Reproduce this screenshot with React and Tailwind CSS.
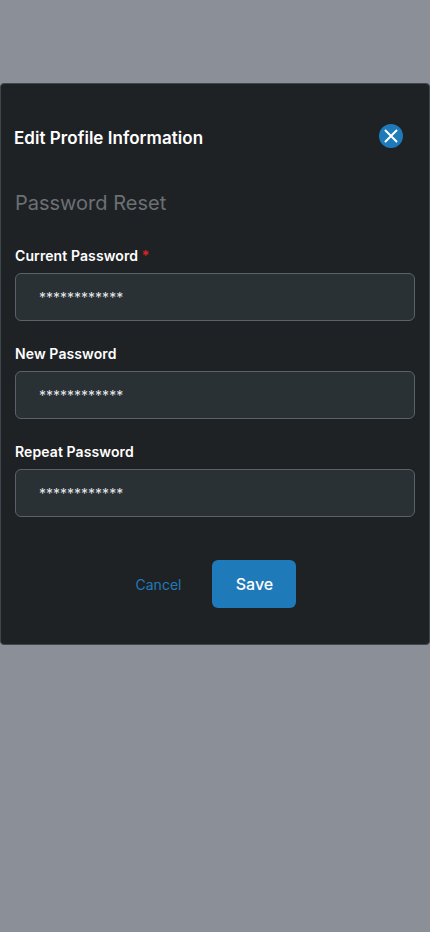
const fields = [
  { label: "Current Password", required: true },
  { label: "New Password" },
  { label: "Repeat Password" },
];

function PasswordField({ label, required }) {
  return (
    <div className="flex flex-col">
      <label className="h-[20px] text-[14px] leading-[20px] font-semibold tracking-[0.1px] text-white">
        {label}
        {required && <span className="text-[#e02424]"> *</span>}
      </label>
      <div className="mt-[7px] h-[48px] flex items-center rounded-[6px] border border-[#5a6169] bg-[#2a3135] pl-[23px] text-[14px] text-[#e5e7eb]">
        ************
      </div>
    </div>
  );
}

export default function App() {
  return (
    <div className="min-h-[932px] bg-[#8b8f97] pt-[83px] font-['Inter',sans-serif]">
      <div className="h-[562px] w-full rounded-[4px] border border-[#3f464c] bg-[#1f2225] px-[14px]">
        <div className="mt-[40px] flex h-[28px] items-center justify-between pr-[12px]">
          <h2 className="text-[17px] leading-[28px] font-semibold tracking-[0.04px] text-white -ml-px">
            Edit Profile Information
          </h2>
          <button className="-mt-[5px] flex h-[24px] w-[24px] items-center justify-center rounded-full bg-[#1f7ab9]">
            <svg width="24" height="24" viewBox="0 0 24 24" fill="none" stroke="white" strokeWidth="2" strokeLinecap="round">
              <path d="M6.5 6.5 L17.5 17.5 M17.5 6.5 L6.5 17.5" />
            </svg>
          </button>
        </div>
        <h3 className="mt-[37px] text-[20px] leading-[28px] text-[#6b7075]">
          Password Reset
        </h3>
        <div className="mt-[29px] flex flex-col gap-[23px]">
          {fields.map((field) => (
            <PasswordField key={field.label} {...field} />
          ))}
        </div>
        <div className="mt-[43px] flex items-center justify-center gap-[31px] pl-[2px]">
          <button className="text-[14px] text-[#1f7ab9]">Cancel</button>
          <button className="h-[48px] w-[84px] rounded-[6px] bg-[#1f7ab9] text-[16px] font-medium text-white">
            Save
          </button>
        </div>
      </div>
    </div>
  );
}
